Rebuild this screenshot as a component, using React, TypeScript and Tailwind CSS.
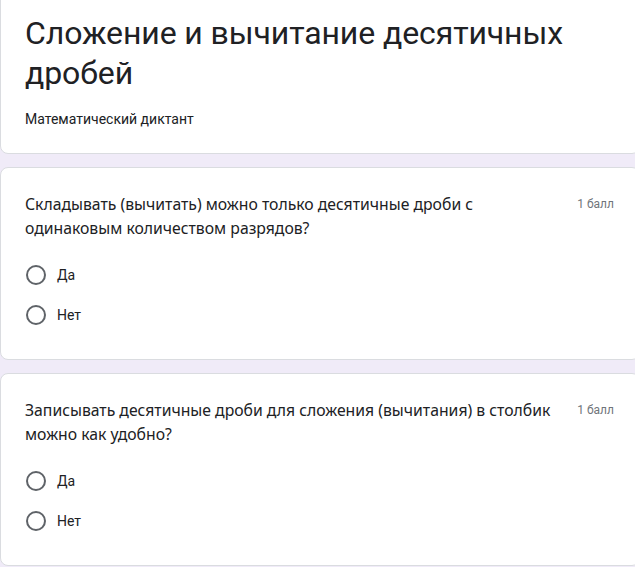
import React from "react";

function Radio({ label }: { label: string }) {
  return (
    <div className="flex items-center h-10">
      <div className="w-5 h-5 rounded-full border-2 border-[#5f6368] ml-[1px]" />
      <span className="ml-[11px] text-[14px] text-[#202124] font-['Roboto',sans-serif]">{label}</span>
    </div>
  );
}

function Question({ text, top }: { text: string; top: string }) {
  return (
    <div className={`${top} w-[640px] bg-white border border-[#dadce0] rounded-lg pl-6 pr-[25px] pt-6 pb-6`}>
      <div className="flex items-start">
        <div className="flex-1 text-[15.75px] leading-6 text-[#202124] font-['Noto_Sans',sans-serif]">
          {text}
        </div>
        <div className="ml-3 text-[12px] leading-6 text-[#70757a] font-['Roboto',sans-serif] whitespace-nowrap">1 балл</div>
      </div>
      <div className="mt-[15px]">
        <Radio label="Да" />
        <Radio label="Нет" />
      </div>
    </div>
  );
}

export default function App() {
  return (
    <div className="w-screen h-screen overflow-hidden bg-[#f0ebf8]">
      <div className="-mt-[12px] w-[640px] bg-white border border-[#dadce0] rounded-lg px-6 pt-6 pb-6">
        <div className="text-[32px] leading-10 text-[#202124] font-['Roboto',sans-serif] tracking-[-0.1px]">
          Сложение и вычитание десятичных дробей
        </div>
        <div className="mt-4 text-[14px] leading-5 text-[#202124] font-['Roboto',sans-serif]">
          Математический диктант
        </div>
      </div>
      <Question top="mt-[13px]" text="Складывать (вычитать) можно только десятичные дроби с одинаковым количеством разрядов?" />
      <Question top="mt-[13px]" text="Записывать десятичные дроби для сложения (вычитания) в столбик можно как удобно?" />
    </div>
  );
}
